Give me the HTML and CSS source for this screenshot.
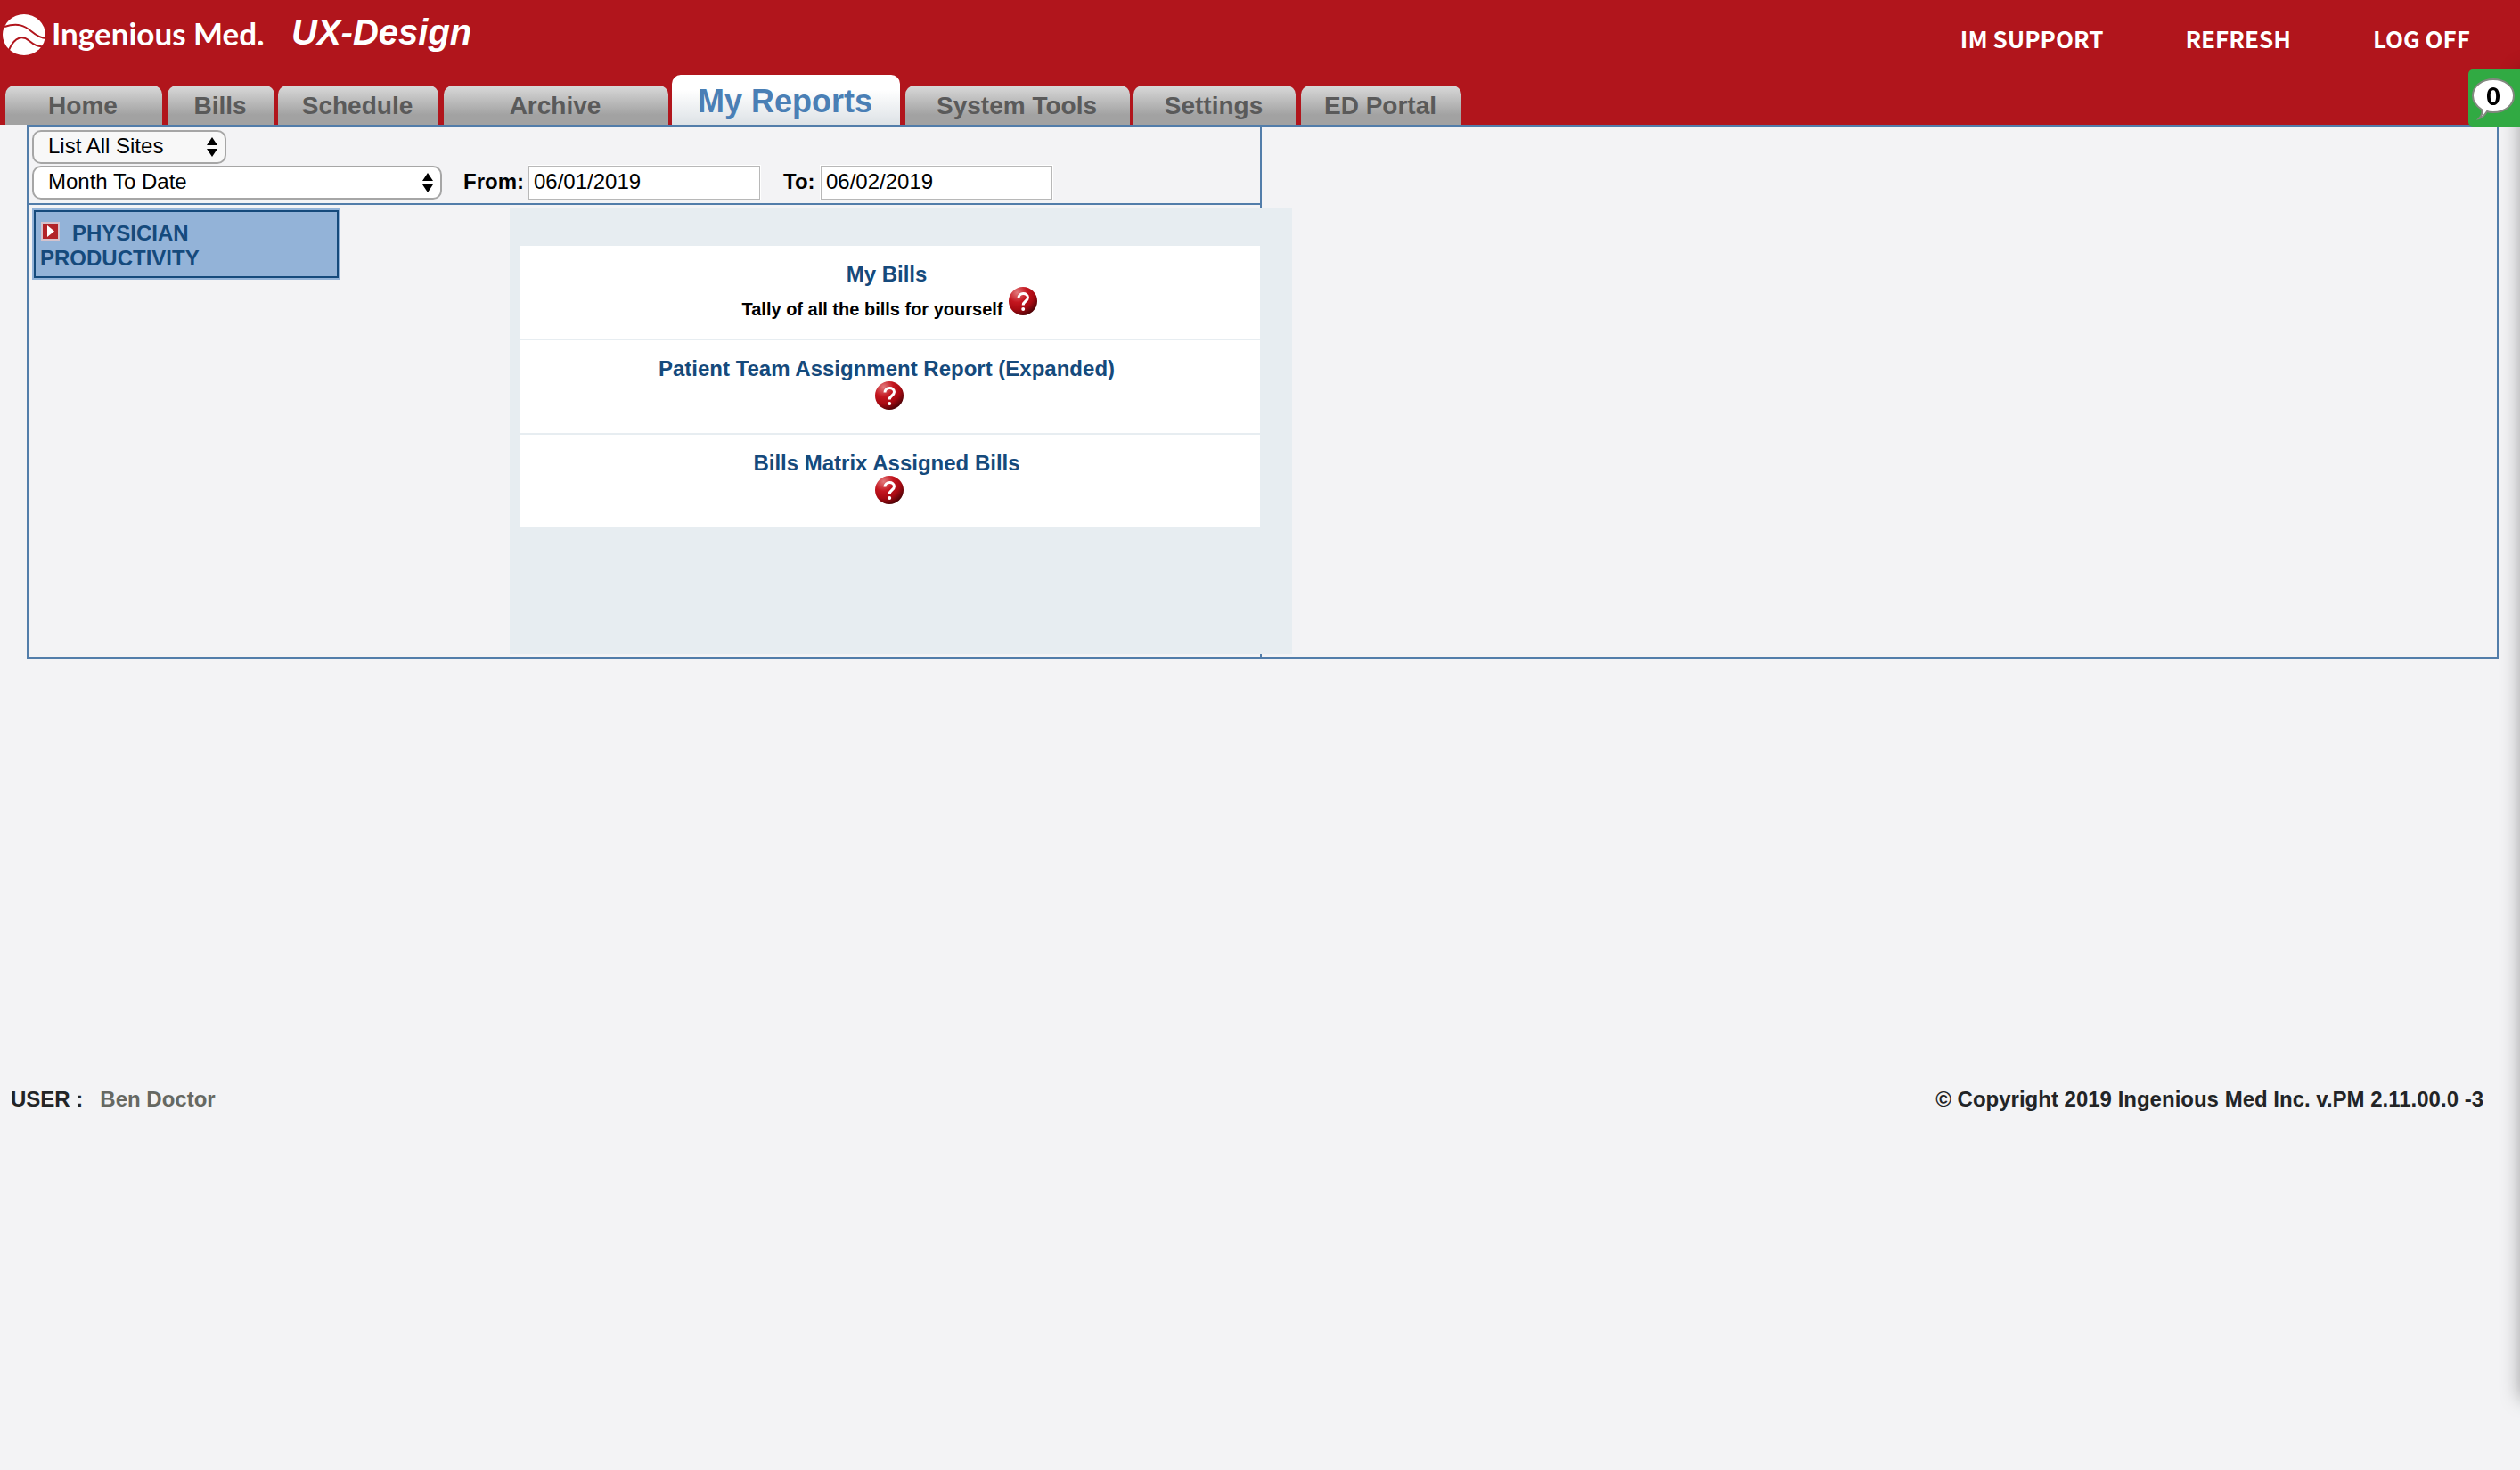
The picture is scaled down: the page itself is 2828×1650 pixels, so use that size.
FILE: index.html
```html
<!DOCTYPE html>
<html lang="en">
<head>
<meta charset="utf-8">
<title>Ingenious Med - My Reports</title>
<link rel="stylesheet" href="styles.css">
</head>
<body>
<svg class="defs" aria-hidden="true">
  <defs>
    <radialGradient id="ball" cx="0.3" cy="0.2" r="0.85">
      <stop offset="0" stop-color="#e27a7c"/>
      <stop offset="0.4" stop-color="#c4161f"/>
      <stop offset="0.7" stop-color="#a80a12"/>
      <stop offset="1" stop-color="#4c0206"/>
    </radialGradient>
    <symbol id="help" viewBox="0 0 32 32">
      <circle cx="16" cy="16" r="16" fill="url(#ball)"/>
      <path d="M11 12.5C11 6 21.5 6 21.5 12C21.5 16 16.2 16 16.2 20.5" fill="none" stroke="#fff" stroke-width="3"/>
      <circle cx="16.2" cy="25" r="2" fill="#fff"/>
    </symbol>
  </defs>
</svg>
<header class="header">
  <div class="topbar">
    <a class="brand" href="#">
      <svg class="brand-mark" viewBox="0 0 50 46" aria-hidden="true">
        <ellipse cx="25" cy="23" rx="24" ry="23" fill="#fff"/>
        <path d="M3 14C18 9 26 13 33 19C39 24 44 27 50 27" fill="none" stroke="#b1151c" stroke-width="2"/>
        <path d="M8 40C15 24 24 24 31 30C37 35 42 37 47 36" fill="none" stroke="#b1151c" stroke-width="2"/>
      </svg>
      <span class="brand-name">Ingenious Med.</span>
    </a>
    <h1 class="site">UX-Design</h1>
    <nav class="links">
      <a href="#">IM SUPPORT</a>
      <a href="#">REFRESH</a>
      <a href="#">LOG OFF</a>
    </nav>
  </div>
  <nav class="tabs">
    <a class="tab home" href="#">Home</a>
    <a class="tab bills" href="#">Bills</a>
    <a class="tab schedule" href="#">Schedule</a>
    <a class="tab archive" href="#">Archive</a>
    <a class="tab reports active" href="#">My Reports</a>
    <a class="tab tools" href="#">System Tools</a>
    <a class="tab settings" href="#">Settings</a>
    <a class="tab portal" href="#">ED Portal</a>
  </nav>
  <button class="messages" type="button" aria-label="Messages">
    <svg class="bubble" viewBox="0 0 50 48" aria-hidden="true">
      <path d="M25 2C38 2 48 10 48 20.500C48 31 38 39 25 39C22 39 20 39 18 38C16 41 14 45 9 46C12 43 13 39 12 36C6 32 2 27 2 20.500C2 10 12 2 25 2Z" fill="#fff" stroke="#82887f" stroke-width="2"/>
    </svg>
    <span class="count">0</span>
  </button>
</header>
<main class="panel">
  <div class="body">
    <form class="filters">
      <div class="line">
        <span class="select sites"><select aria-label="Sites"><option>List All Sites</option></select><svg class="arrows" viewBox="0 0 12 22" aria-hidden="true"><path d="M6 0L12 9H0ZM6 22L12 13H0Z"/></svg></span>
      </div>
      <div class="line">
        <span class="select period"><select aria-label="Period"><option>Month To Date</option></select><svg class="arrows" viewBox="0 0 12 22" aria-hidden="true"><path d="M6 0L12 9H0ZM6 22L12 13H0Z"/></svg></span>
        <label class="date" for="from">From:</label>
        <input class="day" id="from" type="text" value="06/01/2019">
        <label class="date to" for="to">To:</label>
        <input class="day" id="to" type="text" value="06/02/2019">
      </div>
    </form>
    <div class="content">
      <nav class="menu">
        <a class="category" href="#"><svg class="play" viewBox="0 0 21 21" aria-hidden="true"><rect x="1" y="1" width="19" height="19" fill="#b22429" stroke="#d5c3cd" stroke-width="2"/><path d="M7 4L15 10.500L7 17Z" fill="#fff"/></svg>PHYSICIAN PRODUCTIVITY</a>
      </nav>
      <section class="reports-area">
        <ul class="list">
          <li class="report">
            <a class="title" href="#">My Bills</a>
            <div class="note"><span>Tally of all the bills for yourself</span><button class="help" type="button" aria-label="Help"><svg viewBox="0 0 32 32"><use href="#help"/></svg></button></div>
          </li>
          <li class="report">
            <a class="title" href="#">Patient Team Assignment Report (Expanded)</a>
            <div class="note"><button class="help" type="button" aria-label="Help"><svg viewBox="0 0 32 32"><use href="#help"/></svg></button></div>
          </li>
          <li class="report">
            <a class="title" href="#">Bills Matrix Assigned Bills</a>
            <div class="note"><button class="help" type="button" aria-label="Help"><svg viewBox="0 0 32 32"><use href="#help"/></svg></button></div>
          </li>
        </ul>
      </section>
    </div>
  </div>
</main>
<footer class="footer">
  <div class="user"><span>USER :</span><span class="user-name">Ben Doctor</span></div>
  <div>© Copyright 2019 Ingenious Med Inc. v.PM 2.11.00.0 -3</div>
</footer>
<aside class="drawer" aria-hidden="true"></aside>
</body>
</html>
```
FILE: styles.css
```css
* {
  box-sizing: border-box;
}

body {
  margin: 0;
  background: #f3f3f5;
  color: #000;
  font-family: "Liberation Sans", Arial, sans-serif;
  font-size: 24px;
  line-height: 28px;
  overflow-x: hidden;
}

a {
  color: inherit;
  text-decoration: none;
}

.defs {
  position: absolute;
  width: 0;
  height: 0;
}

/* Header */
.header {
  position: relative;
  background: #b1151c;
  color: #fff;
}

.topbar {
  display: flex;
  align-items: flex-start;
  height: 84px;
  padding: 16px 56px 0 2px;
}

.brand {
  display: flex;
  gap: 6px;
  width: 325px;
}

.brand-mark {
  width: 50px;
  height: 46px;
}

.brand-name {
  font-family: Lato, sans-serif;
  font-weight: 700;
  font-size: 35px;
  line-height: 42px;
}

.site {
  margin: 0;
  font-size: 40px;
  line-height: 40px;
  font-style: italic;
  font-weight: 700;
}

.links {
  display: flex;
  gap: 92px;
  margin-left: auto;
  font-family: "Noto Sans CJK SC", sans-serif;
  font-weight: 700;
  font-size: 26px;
  line-height: 54px;
}

.tabs {
  display: flex;
  align-items: flex-end;
  gap: 4px;
  height: 56px;
  padding-left: 6px;
}

.tab {
  height: 44px;
  padding-right: 2px;
  border-radius: 10px 10px 0 0;
  background: linear-gradient(#d9d9d9, #a2a2a2 75%, #a2a2a2);
  color: #5a5a5a;
  font-size: 28px;
  font-weight: 700;
  line-height: 46px;
  text-align: center;
}

.tab.active {
  height: 56px;
  background: linear-gradient(#fff 30%, #dde2e6);
  color: #4a7fb5;
  font-size: 36px;
  line-height: 60px;
}

.home {
  width: 176px;
}

.bills {
  width: 120px;
  margin-left: 2px;
}

.schedule {
  width: 180px;
}

.archive {
  width: 252px;
  margin-left: 2px;
}

.reports {
  width: 256px;
}

.tools {
  width: 252px;
  margin-left: 2px;
}

.settings {
  width: 182px;
}

.portal {
  width: 180px;
  margin-left: 2px;
}

.messages {
  position: absolute;
  z-index: 2;
  right: 0;
  top: 78px;
  width: 58px;
  height: 64px;
  padding: 0;
  border: 0;
  border-radius: 5px 0 0 5px;
  background: #31aa43;
}

.bubble {
  position: absolute;
  left: 3px;
  top: 9px;
  width: 50px;
  height: 48px;
}

.count {
  position: absolute;
  left: 0;
  top: 13px;
  width: 56px;
  color: #000;
  font-family: "Noto Sans CJK SC", sans-serif;
  font-weight: 700;
  font-size: 28px;
  line-height: 30px;
  text-align: center;
}

/* Main panel */
.panel {
  margin: 0 24px 0 30px;
  border: 2px solid #527daa;
}

.body {
  width: 1384px;
  border-right: 2px solid #527daa;
}

.filters {
  padding: 4px;
  border-bottom: 2px solid #527daa;
}

.line {
  display: flex;
  align-items: center;
  height: 38px;
}

.line + .line {
  margin-top: 2px;
}

.select {
  position: relative;
}

.select select {
  display: block;
  width: 100%;
  height: 38px;
  padding: 0 16px 2px;
  border: 2px solid #a6a6a6;
  border-radius: 10px;
  appearance: none;
  background: #fff;
  color: #000;
  font: inherit;
}

.arrows {
  position: absolute;
  right: 10px;
  top: 8px;
  width: 12px;
  height: 22px;
  pointer-events: none;
}

.sites {
  width: 218px;
}

.sites select {
  background: #f8f8f8;
}

.period {
  width: 460px;
}

.date {
  width: 73px;
  margin-left: 24px;
  padding-bottom: 2px;
  font-weight: 700;
}

.to {
  width: 42px;
  margin-left: 26px;
}

.day {
  width: 260px;
  height: 38px;
  padding: 0 5px 2px;
  border: 1px solid #b8b8b8;
  background: #fff;
  box-shadow: 0 0 0 1px #fff;
  font: inherit;
}

.content {
  display: flex;
  padding: 4px 0 4px 4px;
}

.menu {
  flex: none;
  width: 346px;
  margin-right: 190px;
}

.category {
  display: block;
  height: 80px;
  padding: 12px 150px 0 7px;
  border: 2px solid #93b3d8;
  outline: 2px solid #154a7c;
  outline-offset: -4px;
  background: #93b3d8;
  color: #154a7c;
  font-weight: 700;
}

.play {
  width: 21px;
  height: 21px;
  margin: 0 14px 0 1px;
  vertical-align: baseline;
}

/* Wider than its column: runs over the dividing line on the right */
.reports-area {
  flex: none;
  position: relative;
  width: 878px;
  min-height: 500px;
  padding: 42px 36px 0 12px;
  background: #e7edf1;
}

.list {
  display: grid;
  gap: 2px;
  margin: 0;
  padding: 0;
  list-style: none;
}

.report {
  display: flex;
  flex-direction: column;
  align-items: center;
  height: 104px;
  padding: 18px 2px 0 0;
  background: #fff;
}

.title {
  padding-right: 6px;
  color: #154a7c;
  font-weight: 700;
}

.note {
  display: flex;
  align-items: baseline;
  gap: 6px;
  font-size: 20px;
  font-weight: 700;
}

.help {
  width: 32px;
  height: 32px;
  padding: 0;
  border: 0;
  background: none;
  line-height: 0;
}

.help svg {
  width: 32px;
  height: 32px;
}

/* Footer */
.footer {
  display: flex;
  justify-content: space-between;
  margin-top: 480px;
  padding: 0 41px 0 12px;
  color: #222426;
  font-weight: 700;
}

.user {
  display: flex;
  gap: 19px;
}

.user-name {
  color: #666862;
}

/* Closed message drawer; only its shadow reaches the window */
.drawer {
  position: fixed;
  left: 100%;
  top: 78px;
  bottom: 80px;
  width: 400px;
  box-shadow: 0 0 20px rgba(0, 0, 0, 0.35);
}
```
